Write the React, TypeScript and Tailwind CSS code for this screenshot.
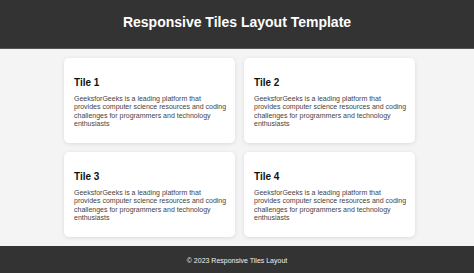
import React from "react";

const tiles = ["Tile 1", "Tile 2", "Tile 3", "Tile 4"];

const blurb =
  "GeeksforGeeks is a leading platform that provides computer science resources and coding challenges for programmers and technology enthusiasts";

export default function App() {
  return (
    <div className="min-h-[273px] flex flex-col bg-[#f4f4f4] font-['Liberation_Sans',Arial,sans-serif]">
      {/* Header */}
      <header className="h-[49px] pt-[14px] bg-[#333333] text-white text-center border-b border-[#555]">
        <h1 className="text-[14px] font-bold leading-[1.15]">
          Responsive Tiles Layout Template
        </h1>
      </header>

      {/* Tiles */}
      <main className="flex-1 py-[9px] pl-[64px]">
        <div className="grid grid-cols-[171px_171px] gap-[9px]">
          {tiles.map(t => (
            <Tile key={t} title={t} />
          ))}
        </div>
      </main>

      {/* Footer */}
      <footer className="h-[27px] pt-[3px] bg-[#333333] text-[#f0f0f0] flex items-center justify-center">
        <p className="text-[7px] leading-[1.15]">© 2023 Responsive Tiles Layout</p>
      </footer>
    </div>
  );
}

function Tile({ title }: { title: string }) {
  return (
    <div className="h-[85px] bg-white rounded-[5px] shadow-[0_1px_4px_rgba(0,0,0,0.1)] pt-[10px] pb-[10px] pl-[10px] pr-[7px]">
      <h2 className="text-[10px] font-bold leading-[1.15] text-[#111] mt-[8.5px] mb-[7px]">
        {title}
      </h2>
      <p className="text-[7px] leading-[8.3px] text-[#444]">{blurb}</p>
    </div>
  );
}
